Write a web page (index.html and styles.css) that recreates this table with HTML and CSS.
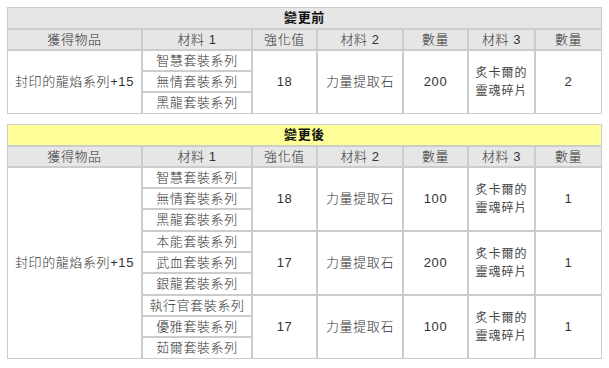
FILE: index.html
```html
<!DOCTYPE html>
<html lang="zh-Hant">
<head>
<meta charset="utf-8">
<link rel="stylesheet" href="styles.css">
</head>
<body>
<div class="page">
  <table class="grid">
    <colgroup>
      <col class="c1"><col class="c2"><col class="c3"><col class="c4"><col class="c5"><col class="c6"><col class="c7">
    </colgroup>
    <tr class="title-row"><td colspan="7" class="title">變更前</td></tr>
    <tr class="head-row">
      <td class="head">獲得物品</td><td class="head">材料 1</td><td class="head">強化值</td><td class="head">材料 2</td><td class="head">數量</td><td class="head">材料 3</td><td class="head">數量</td>
    </tr>
    <tr class="sub">
      <td rowspan="3">封印的龍焰系列+15</td><td>智慧套裝系列</td><td rowspan="3">18</td><td rowspan="3">力量提取石</td><td rowspan="3">200</td><td rowspan="3" class="small">炙卡爾的<br>靈魂碎片</td><td rowspan="3">2</td>
    </tr>
    <tr class="sub"><td>無情套裝系列</td></tr>
    <tr class="sub tall"><td>黑龍套裝系列</td></tr>
  </table>

  <table class="grid">
    <colgroup>
      <col class="c1"><col class="c2"><col class="c3"><col class="c4"><col class="c5"><col class="c6"><col class="c7">
    </colgroup>
    <tr class="title-row"><td colspan="7" class="title yellow">變更後</td></tr>
    <tr class="head-row">
      <td class="head">獲得物品</td><td class="head">材料 1</td><td class="head">強化值</td><td class="head">材料 2</td><td class="head">數量</td><td class="head">材料 3</td><td class="head">數量</td>
    </tr>
    <tr class="sub">
      <td rowspan="9">封印的龍焰系列+15</td><td>智慧套裝系列</td><td rowspan="3">18</td><td rowspan="3">力量提取石</td><td rowspan="3">100</td><td rowspan="3" class="small">炙卡爾的<br>靈魂碎片</td><td rowspan="3">1</td>
    </tr>
    <tr class="sub"><td>無情套裝系列</td></tr>
    <tr class="sub tall"><td>黑龍套裝系列</td></tr>
    <tr class="sub">
      <td>本能套裝系列</td><td rowspan="3">17</td><td rowspan="3">力量提取石</td><td rowspan="3">200</td><td rowspan="3" class="small">炙卡爾的<br>靈魂碎片</td><td rowspan="3">1</td>
    </tr>
    <tr class="sub"><td>武血套裝系列</td></tr>
    <tr class="sub tall"><td>銀龍套裝系列</td></tr>
    <tr class="sub">
      <td>執行官套裝系列</td><td rowspan="3">17</td><td rowspan="3">力量提取石</td><td rowspan="3">100</td><td rowspan="3" class="small">炙卡爾的<br>靈魂碎片</td><td rowspan="3">1</td>
    </tr>
    <tr class="sub"><td>優雅套裝系列</td></tr>
    <tr class="sub tall"><td>茹爾套裝系列</td></tr>
  </table>
</div>
</body>
</html>
```

FILE: styles.css
```css
html, body {
  margin: 0;
  padding: 0;
  background: #ffffff;
}

.page {
  padding: 7px 0 0 7px;
  font-family: "Liberation Sans", "Noto Sans CJK TC", sans-serif;
  font-size: 13px;
  font-weight: 300;
  color: #333333;
}

.grid {
  width: 595px;
  table-layout: fixed;
  border-collapse: separate;
  border-spacing: 0;
  margin-bottom: 10px;
}

.c1 { width: 135px; }
.c2 { width: 110px; }
.c3 { width: 65px; }
.c4 { width: 86px; }
.c5 { width: 65px; }
.c6 { width: 67px; }
.c7 { width: 67px; }

.grid td {
  border: 1px solid #cccccc;
  padding: 0;
  text-align: center;
  vertical-align: middle;
  line-height: 16px;
  letter-spacing: 0.6px;
  overflow: hidden;
  white-space: nowrap;
}

.title-row { height: 22px; }
.head-row { height: 21px; }
.sub { height: 21px; }
.sub.tall { height: 22px; }

.grid td.title {
  background: #e6e6e6;
  color: #111111;
  font-weight: bold;
}

.grid td.title.yellow {
  background: #ffff99;
}

.grid td.head {
  background: #e6e6e6;
  color: #333333;
}

.grid td.small {
  font-size: 12px;
  line-height: 18px;
  letter-spacing: 1px;
  color: #444444;
  font-weight: 400;
}
```
